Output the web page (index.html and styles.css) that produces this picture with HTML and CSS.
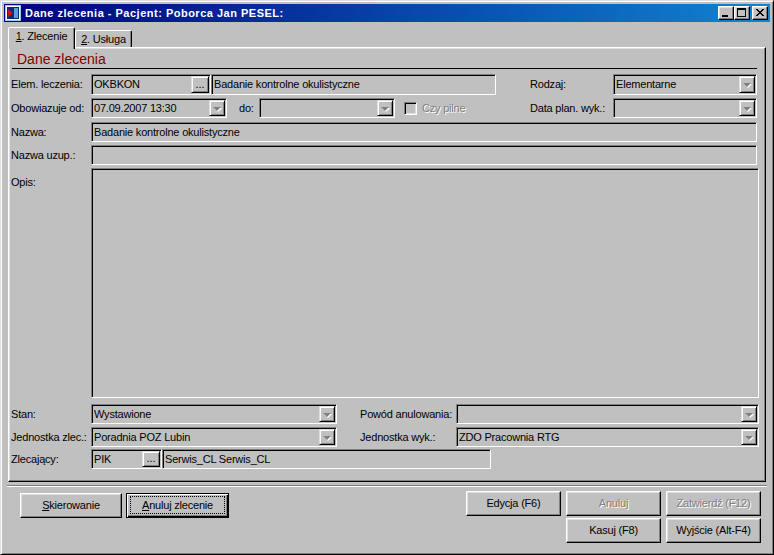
FILE: index.html
```html
<!DOCTYPE html>
<html lang="pl">
<head>
<meta charset="utf-8">
<title>Dane zlecenia</title>
<link rel="stylesheet" href="styles.css">
</head>
<body>
<div class="window">
  <div class="titlebar">
    <svg class="appicon" width="16" height="16" viewBox="0 0 16 16" shape-rendering="crispEdges">
      <rect x="0" y="0" width="16" height="16" fill="#9cc6ee"/>
      <rect x="1" y="1" width="14" height="14" fill="#ffffff"/>
      <rect x="2" y="2" width="12" height="12" fill="#0a2a7a"/>
      <rect x="9" y="3" width="4" height="10" fill="#5aa0e0"/>
      <polygon points="3,4 8,8 3,12" fill="#d01010"/>
    </svg>
    <span class="title">Dane zlecenia - Pacjent: Poborca Jan PESEL:</span>
    <div class="tbtns">
      <div class="tb"><svg width="14" height="12" viewBox="0 0 14 12" shape-rendering="crispEdges"><rect x="3" y="8" width="6" height="2" fill="#000"/></svg></div>
      <div class="tb"><svg width="14" height="12" viewBox="0 0 14 12" shape-rendering="crispEdges" fill="#000"><rect x="2" y="1" width="9" height="2"/><rect x="2" y="1" width="1" height="9"/><rect x="10" y="1" width="1" height="9"/><rect x="2" y="9" width="9" height="1"/></svg></div>
      <div class="tb close"><svg width="14" height="12" viewBox="0 0 14 12" shape-rendering="crispEdges" fill="#000">
        <rect x="3" y="2" width="2" height="1"/><rect x="9" y="2" width="2" height="1"/>
        <rect x="4" y="3" width="2" height="1"/><rect x="8" y="3" width="2" height="1"/>
        <rect x="5" y="4" width="4" height="1"/>
        <rect x="6" y="5" width="2" height="1"/>
        <rect x="5" y="6" width="4" height="1"/>
        <rect x="4" y="7" width="2" height="1"/><rect x="8" y="7" width="2" height="1"/>
        <rect x="3" y="8" width="2" height="1"/><rect x="9" y="8" width="2" height="1"/>
      </svg></div>
    </div>
  </div>

  <div class="client">
    <div class="tabs">
      <div class="tab active"><u>1</u>. Zlecenie</div>
      <div class="tab second"><u>2</u>. Usługa</div>
    </div>

    <div class="panel">
      <div class="hdr">Dane zlecenia</div>

      <div class="row r1">
        <span class="lbl">Elem. leczenia:</span>
        <div class="field lookup w120"><span class="txt">OKBKON</span><span class="ell">...</span></div>
        <div class="field w285"><span class="txt">Badanie kontrolne okulistyczne</span></div>
        <span class="lbl rl">Rodzaj:</span>
        <div class="field combo w144"><span class="txt">Elementarne</span><span class="dd"></span></div>
      </div>

      <div class="row r2">
        <span class="lbl">Obowiazuje od:</span>
        <div class="field combo w136"><span class="txt">07.09.2007 13:30</span><span class="dd"></span></div>
        <span class="lbl do">do:</span>
        <div class="field combo w136"><span class="txt"></span><span class="dd"></span></div>
        <span class="chk"></span>
        <span class="dis">Czy pilne</span>
        <span class="lbl rl">Data plan. wyk.:</span>
        <div class="field combo w144"><span class="txt"></span><span class="dd"></span></div>
      </div>

      <div class="row r3">
        <span class="lbl">Nazwa:</span>
        <div class="field grow"><span class="txt">Badanie kontrolne okulistyczne</span></div>
      </div>

      <div class="row r4">
        <span class="lbl">Nazwa uzup.:</span>
        <div class="field grow"><span class="txt"></span></div>
      </div>

      <div class="row opis">
        <span class="lbl top">Opis:</span>
        <div class="field grow wide"></div>
      </div>

      <div class="row r6">
        <span class="lbl">Stan:</span>
        <div class="field combo w246"><span class="txt">Wystawione</span><span class="dd"></span></div>
        <span class="lbl rl2">Powód anulowania:</span>
        <div class="field combo grow wide"><span class="txt"></span><span class="dd"></span></div>
      </div>

      <div class="row r7">
        <span class="lbl">Jednostka zlec.:</span>
        <div class="field combo w246"><span class="txt">Poradnia POZ Lubin</span><span class="dd"></span></div>
        <span class="lbl rl2">Jednostka wyk.:</span>
        <div class="field combo grow wide"><span class="txt">ZDO Pracownia RTG</span><span class="dd"></span></div>
      </div>

      <div class="row r8">
        <span class="lbl">Zlecający:</span>
        <div class="field lookup w71"><span class="txt">PIK</span><span class="ell">...</span></div>
        <div class="field w329"><span class="txt">Serwis_CL Serwis_CL</span></div>
      </div>
    </div>

    <div class="sep"></div>

    <div class="actions">
      <div class="leftbtns">
        <div class="btn w102"><span class="cap"><u>S</u>kierowanie</span></div>
        <div class="btn default w103"><span class="cap focus"><u>A</u>nuluj zlecenie</span></div>
      </div>
      <div class="rightbtns">
        <div class="btn"><span class="cap">Edycja (F6)</span></div>
        <div class="btn disabled"><span class="cap">Anuluj</span></div>
        <div class="btn disabled"><span class="cap">Zatwierdź (F12)</span></div>
        <div class="btn c2"><span class="cap">Kasuj (F8)</span></div>
        <div class="btn"><span class="cap">Wyjście (Alt-F4)</span></div>
      </div>
    </div>
  </div>
</div>
</body>
</html>
```

FILE: styles.css
```css
* { box-sizing: border-box; }

html, body {
  margin: 0;
  padding: 0;
}

body {
  width: 774px;
  height: 555px;
  overflow: hidden;
  background: #c0c0c0;
  font-family: "Liberation Sans", Arial, sans-serif;
  font-size: 11px;
  letter-spacing: -0.2px;
  color: #000;
}

u { text-decoration: underline; text-underline-offset: 1px; }

/* ---------- window frame ---------- */
.window {
  width: 774px;
  height: 555px;
  background: #c0c0c0;
  border: 1px solid;
  border-color: #dfdfdf #000 #000 #dfdfdf;
  box-shadow: inset 1px 1px #fff, inset -1px -1px #808080;
  padding: 3px;
  display: flex;
  flex-direction: column;
}

.titlebar {
  height: 18px;
  flex: none;
  display: flex;
  align-items: center;
  background: linear-gradient(to right, #000080, #1084d0);
}

.appicon {
  margin-left: 1px;
  flex: none;
}

.title {
  margin-left: 4px;
  color: #fff;
  font-weight: bold;
  font-size: 11px;
  letter-spacing: 0.5px;
  line-height: 13px;
  white-space: nowrap;
}

.tbtns {
  margin-left: auto;
  margin-right: 2px;
  display: flex;
}

.tb {
  width: 16px;
  height: 14px;
  background: #c0c0c0;
  border: 1px solid;
  border-color: #fff #000 #000 #fff;
  box-shadow: inset -1px -1px #808080, inset 1px 1px #dfdfdf;
  display: flex;
  align-items: flex-start;
  justify-content: flex-start;
}

.tb svg { display: block; }

.tb.close { margin-left: 2px; }

/* ---------- client ---------- */
.client {
  flex: 1;
  display: flex;
  flex-direction: column;
  padding: 0 4px;
}

.tabs {
  margin-top: 5px;
  height: 20px;
  display: flex;
  align-items: flex-end;
}

.tab {
  border: 1px solid;
  border-bottom: 0;
  border-color: #fff #000 transparent #fff;
  border-radius: 2px 2px 0 0;
  box-shadow: inset -1px 0 #808080;
  background: #c0c0c0;
  text-align: center;
  padding-top: 2px;
  line-height: 13px;
  white-space: nowrap;
}

.tab.active {
  width: 67px;
  height: 22px;
  margin-bottom: -2px;
  position: relative;
  z-index: 1;
}

.tab.second {
  width: 57px;
  height: 17px;
}

.panel {
  border: 1px solid;
  border-color: #fff #000 #000 #fff;
  box-shadow: inset -1px -1px #808080, inset 1px 1px #dfdfdf;
  padding: 0 8px 12px 1px;
  display: flex;
  flex-direction: column;
}

.hdr {
  margin-left: 2px;
  padding: 3px 0 1px 5px;
  line-height: 16px;
  font-size: 14px;
  letter-spacing: 0;
  color: #800000;
  border-bottom: 1px solid #000;
}

/* ---------- form rows ---------- */
.row {
  display: flex;
  align-items: center;
  height: 20px;
}

.r1 { margin-top: 5px; height: 21px; }
.r2 { margin-top: 3px; }
.r3 { margin-top: 4px; }
.r4 { margin-top: 3px; }
.opis { margin-top: 3px; height: 230px; align-items: stretch; }
.r6 { margin-top: 6px; }
.r7 { margin-top: 3px; }
.r8 { margin-top: 2px; }

.lbl {
  width: 81px;
  flex: none;
  padding-left: 1px;
  line-height: 13px;
  white-space: nowrap;
}

.lbl.top { padding-top: 8px; }

.lbl.rl { margin-left: auto; width: 83px; padding-left: 0; }
.lbl.rl2 { margin-left: 23px; width: 96px; padding-left: 0; }
.lbl.do { margin-left: 12px; width: 20px; padding-left: 0; }

.field {
  align-self: stretch;
  flex: none;
  display: flex;
  align-items: center;
  padding: 1px;
  border: 1px solid;
  border-color: #808080 #fff #fff #808080;
  box-shadow: inset 1px 1px #000;
  background: #c0c0c0;
}

.field.grow { flex: 1; }
.field.wide { margin-right: -2px; }

.w71 { width: 71px; }
.w120 { width: 120px; }
.w136 { width: 136px; }
.w144 { width: 144px; }
.w246 { width: 246px; }
.w285 { width: 285px; }
.w329 { width: 329px; }

.txt {
  flex: 1;
  min-width: 0;
  padding-left: 1px;
  line-height: 13px;
  white-space: nowrap;
  overflow: hidden;
}

.dd, .ell {
  flex: none;
  align-self: stretch;
  background: #c0c0c0;
  border: 1px solid;
  border-color: #dfdfdf #000 #000 #dfdfdf;
  box-shadow: inset 1px 1px #fff, inset -1px -1px #808080;
  display: flex;
  align-items: center;
  justify-content: center;
}

.dd { width: 16px; }

.dd::after {
  content: "";
  width: 0;
  height: 0;
  border-left: 4px solid transparent;
  border-right: 4px solid transparent;
  border-top: 4px solid #808080;
  filter: drop-shadow(1px 1px 0 #fff);
  margin-top: 1px;
}

.ell {
  width: 18px;
  line-height: 13px;
  letter-spacing: 0;
  font-size: 11px;
  padding-bottom: 1px;
}

.chk {
  flex: none;
  width: 13px;
  height: 13px;
  margin-left: 9px;
  border: 1px solid;
  border-color: #808080 #fff #fff #808080;
  box-shadow: inset 1px 1px #000, inset -1px -1px #dfdfdf;
  background: #c0c0c0;
}

.dis {
  margin-left: 5px;
  line-height: 13px;
  color: #808080;
  text-shadow: 1px 1px 0 #fff;
}

/* ---------- bottom ---------- */
.sep {
  margin: 3px -1px 0 -1px;
  height: 2px;
  border-top: 1px solid #808080;
  border-bottom: 1px solid #fff;
}

.actions {
  display: flex;
  padding-top: 4px;
}

.leftbtns {
  display: flex;
  gap: 4px;
  margin-left: 12px;
  margin-top: 2px;
  align-self: flex-start;
}

.rightbtns {
  margin-left: auto;
  margin-right: 5px;
  display: grid;
  grid-template-columns: 95px 95px 95px;
  grid-auto-rows: 25px;
  column-gap: 5px;
  row-gap: 2px;
}

.c2 { grid-column: 2; }

.btn {
  height: 25px;
  background: #c0c0c0;
  border: 1px solid;
  border-color: #fff #000 #000 #fff;
  box-shadow: inset -1px -1px #808080, inset 1px 1px #dfdfdf;
  display: flex;
  align-items: center;
  justify-content: center;
  padding: 2px;
}

.w102 { width: 102px; }
.w103 { width: 103px; }

.btn.default {
  border: 1px solid #000;
  box-shadow: inset 1px 1px #fff, inset -1px -1px #000, inset -2px -2px #808080;
  padding: 2px 3px 3px 3px;
}

.cap {
  line-height: 13px;
  white-space: nowrap;
}

.cap.focus {
  flex: 1;
  align-self: stretch;
  display: flex;
  align-items: center;
  justify-content: center;
  border: 1px dotted #000;
}

.btn.disabled .cap {
  color: #808080;
  text-shadow: 1px 1px 0 #fff;
}
```
